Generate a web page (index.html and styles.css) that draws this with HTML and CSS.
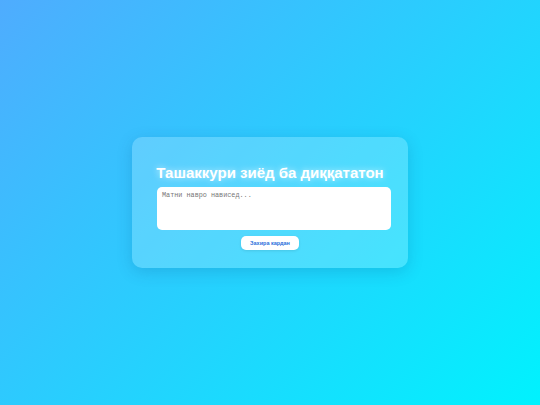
FILE: index.html
```html
<!DOCTYPE html>
<html lang="tg">
<head>
<meta charset="utf-8">
<title>Ташаккури зиёд</title>
<link rel="stylesheet" href="styles.css">
</head>
<body>
<main class="page">
  <section class="card">
    <h1 class="title">Ташаккури зиёд ба диққататон</h1>
    <textarea class="note" placeholder="Матни навро нависед..."></textarea>
    <button class="save" type="button">Захира кардан</button>
  </section>
</main>
</body>
</html>
```
FILE: styles.css
```css
html, body {
  margin: 0;
  padding: 0;
  height: 100%;
}
body {
  background: linear-gradient(135deg, #4facfe 0%, #00f2fe 100%);
  font-family: "Liberation Sans", Arial, sans-serif;
}
.page {
  height: 100%;
  display: flex;
  align-items: center;
  justify-content: center;
}
.card {
  width: 276px;
  height: 131px;
  box-sizing: border-box;
  padding: 25px 25px 17px 25px;
  background: rgba(255, 255, 255, 0.2);
  border-radius: 10px;
  box-shadow: 0 4px 16px rgba(0, 60, 120, 0.18);
  display: flex;
  flex-direction: column;
  align-items: center;
}
.title {
  margin: 0 0 4px;
  color: #fff;
  font-size: 15px;
  font-weight: 700;
  line-height: 21px;
  text-shadow: 0 0 6px rgba(255, 255, 255, 0.7);
  white-space: nowrap;
}
.note {
  width: 234px;
  height: 43px;
  margin-right: -8px;
  flex-shrink: 0;
  box-sizing: border-box;
  border: none;
  border-radius: 5px;
  background: #fff;
  padding: 4px 5px;
  font-family: "Liberation Mono", monospace;
  font-size: 6.8px;
  resize: none;
  align-self: flex-start;
}
.note::placeholder {
  color: #777;
}
.save {
  margin-top: 6px;
  width: 58px;
  height: 14px;
  border: none;
  border-radius: 5px;
  background: #fff;
  color: #2a6fdb;
  font-family: "Liberation Sans", Arial, sans-serif;
  font-size: 5.5px;
  font-weight: 700;
  padding: 0;
  box-shadow: 0 1px 3px rgba(0, 0, 0, 0.1);
}
```
